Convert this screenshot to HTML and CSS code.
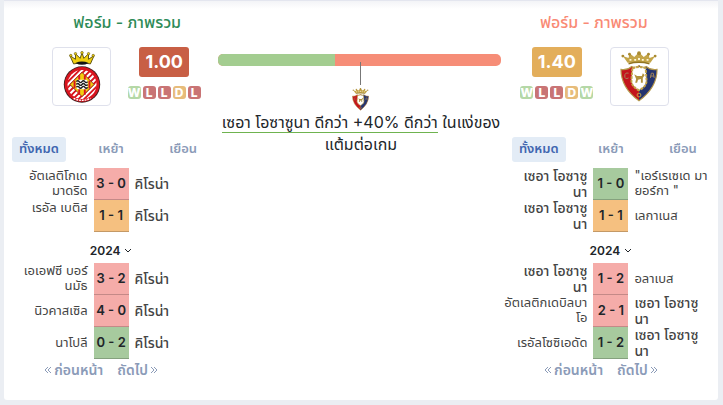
FILE: index.html
```html
<!DOCTYPE html>
<html lang="th">
<head>
    <meta charset="UTF-8">
    <meta name="viewport" content="width=device-width, initial-scale=1.0">
    <title>ฟอร์ม - ภาพรวม</title>
    <link rel="stylesheet" href="styles.css">
</head>
<body>
    <!-- Shared crests -->
    <svg class="defs" width="0" height="0" aria-hidden="true">
        <defs>
            <clipPath id="ring"><circle cx="30" cy="38" r="16"/></clipPath>
            <symbol id="girona" viewBox="0 0 60 60">
                <path d="M21 16 L17 7 L23 11 L23 5 L28 10 L30 4 L32 10 L37 5 L37 11 L43 7 L39 16 Q30 13 21 16z" fill="#f0cf10" stroke="#54490c" stroke-width="1"/>
                <g fill="#f0cf10" stroke="#54490c" stroke-width=".6"><circle cx="18" cy="7" r="1.3"/><circle cx="23" cy="5" r="1.3"/><circle cx="30" cy="4" r="1.4"/><circle cx="37" cy="5" r="1.3"/><circle cx="42" cy="7" r="1.3"/></g>
                <path d="M23 15 Q30 12 37 15 Q30 19 23 15z" fill="#151515"/>
                <circle cx="30" cy="38" r="19.5" fill="#3b2020"/>
                <circle cx="30" cy="38" r="18.6" fill="#d9141e"/>
                <circle cx="30" cy="38" r="15.5" fill="#fff"/>
                <g clip-path="url(#ring)" stroke="#d9141e" stroke-width="2">
                    <path d="M10 34L28 16M10 40L34 16M10 46L40 16M10 52L46 16M10 58L52 16M16 58L54 20M22 58L54 26M28 58L54 32M34 58L54 38"/>
                </g>
                <path d="M30 25L43 38L30 51L17 38z" fill="#f0cf10" stroke="#8a1a15" stroke-width="1"/>
                <path d="M27 28V49M33 28V49M22 34V42M38 34V42" stroke="#d9141e" stroke-width="2"/>
                <rect x="24" y="33" width="12" height="10" rx="2" fill="#fff"/>
                <path d="M24 35q1.500-2 3 0t3 0t3 0t3 0M24 38q1.500-2 3 0t3 0t3 0t3 0M24 41q1.500-2 3 0t3 0t3 0t3 0" fill="none" stroke="#222" stroke-width="1.500"/>
                <path d="M21 53q9 4 18 0" fill="none" stroke="#fff" stroke-width="1.500" stroke-dasharray="2 1"/>
            </symbol>
            <symbol id="osasuna" viewBox="0 0 40 54">
                <path d="M8 12L3 5L9 7L10 2L15 6L20 1L25 6L30 2L31 7L37 5L32 12z" fill="#c4a548"/>
                <g fill="#a98a31"><circle cx="3" cy="5" r="1.500"/><circle cx="10" cy="3" r="1.500"/><circle cx="20" cy="2" r="2"/><circle cx="30" cy="3" r="1.500"/><circle cx="37" cy="5" r="1.500"/></g>
                <path d="M10 9h2m3 0h2m2-1h2m2 1h2m3 0h2" stroke="#fff6d5" stroke-width="2"/>
                <path d="M9 13Q20 10 31 13" fill="none" stroke="#917522" stroke-width="1.500"/>
                <path d="M1 19Q8 20 12 16Q16 18 20 15Q24 18 28 16Q32 20 39 19Q39 38 20 52Q1 38 1 19z" fill="#c3151c"/>
                <path d="M20 15Q24 18 28 16Q32 20 39 19Q39 38 20 52z" fill="#24346f"/>
                <path d="M1 19Q8 20 12 16Q16 18 20 15Q24 18 28 16Q32 20 39 19Q39 38 20 52Q1 38 1 19z" fill="none" stroke="#b59a4d" stroke-width="1.200"/>
                <path d="M13 18Q20 15 27 18L28 31Q28 37 20 41Q12 37 12 31z" fill="#fff" stroke="#c4a548" stroke-width="2" stroke-dasharray="3 1"/>
                <path d="M15 24l3 2h5l1-3 2 2-2 3v5h-2v-4l-3 1-1 3h-2l1-4z" fill="#b1923c"/>
                <path d="M9 23q-4-1-4 3t4 2M32 28l1-5h2l1 5M32 26h4" fill="none" stroke="#a5875b" stroke-width="1"/>
                <circle cx="20" cy="46" r="2" fill="none" stroke="#c4a548"/>
            </symbol>
        </defs>
    </svg>

    <main class="card">
        <section class="team">
            <div class="team-head team-head-home">
                <div class="team-box">
                    <h2 class="title home">ฟอร์ม - ภาพรวม</h2>
                    <div class="summary">
                        <div class="crest"><svg class="crest-girona" role="img" aria-label="คิโรน่า"><use href="#girona"/></svg></div>
                        <div class="rating">
                            <div class="points low">1.00</div>
                            <div class="form"><span class="w">W</span><span class="l">L</span><span class="l">L</span><span class="d">D</span><span class="l">L</span></div>
                        </div>
                    </div>
                </div>
            </div>
            <div class="tabs">
                <button class="tab active">ทั้งหมด</button>
                <button class="tab">เหย้า</button>
                <button class="tab">เยือน</button>
            </div>
            <table class="results">
                <tr><td class="left">อัตเลติโกเด<br>มาดริด</td><td class="score loss">3 - 0</td><td class="own">คิโรน่า</td></tr>
                <tr><td class="left top">เรอัล เบติส</td><td class="score draw">1 - 1</td><td class="own">คิโรน่า</td></tr>
            </table>
            <button class="year">2024 <svg class="chevron" viewBox="0 0 8 8"><path d="M1 2l3 3 3-3"/></svg></button>
            <table class="results">
                <tr><td class="left">เอเอฟซี บอร์<br>นมัธ</td><td class="score loss">3 - 2</td><td class="own">คิโรน่า</td></tr>
                <tr><td class="left">นิวคาสเซิล</td><td class="score loss">4 - 0</td><td class="own">คิโรน่า</td></tr>
                <tr><td class="left">นาโปลี</td><td class="score win">0 - 2</td><td class="own">คิโรน่า</td></tr>
            </table>
            <nav class="pager">
                <a href="#"><svg class="arrows" viewBox="0 0 8 8"><path d="M4 1L1 4l3 3M7 1L4 4l3 3"/></svg>ก่อนหน้า</a>
                <a href="#">ถัดไป<svg class="arrows" viewBox="0 0 8 8"><path d="M1 1l3 3-3 3M4 1l3 3-3 3"/></svg></a>
            </nav>
        </section>

        <section class="compare">
            <div class="bar"><div class="bar-home" style="width: 41.5%"></div></div>
            <div class="pointer"></div>
            <svg class="mini-crest" role="img" aria-label="เซอา โอซาซูนา"><use href="#osasuna"/></svg>
            <p class="verdict"><span class="better">เซอา โอซาซูนา ดีกว่า +40% ดีกว่า</span> ในแง่ของ<br>แต้มต่อเกม</p>
        </section>

        <section class="team">
            <div class="team-head">
                <div class="team-box">
                    <h2 class="title away">ฟอร์ม - ภาพรวม</h2>
                    <div class="summary">
                        <div class="rating">
                            <div class="points mid">1.40</div>
                            <div class="form"><span class="w">W</span><span class="l">L</span><span class="l">L</span><span class="d">D</span><span class="w">W</span></div>
                        </div>
                        <div class="crest"><svg class="crest-osasuna" role="img" aria-label="เซอา โอซาซูนา"><use href="#osasuna"/></svg></div>
                    </div>
                </div>
            </div>
            <div class="tabs">
                <button class="tab active">ทั้งหมด</button>
                <button class="tab">เหย้า</button>
                <button class="tab">เยือน</button>
            </div>
            <table class="results">
                <tr><td class="left own">เซอา โอซาซู<br>นา</td><td class="score win">1 - 0</td><td>"เอร์เรเซเด มา<br>ยอร์กา "</td></tr>
                <tr><td class="left own">เซอา โอซาซู<br>นา</td><td class="score draw">1 - 1</td><td>เลกาเนส</td></tr>
            </table>
            <button class="year">2024 <svg class="chevron" viewBox="0 0 8 8"><path d="M1 2l3 3 3-3"/></svg></button>
            <table class="results">
                <tr><td class="left own">เซอา โอซาซู<br>นา</td><td class="score loss">1 - 2</td><td>อลาเบส</td></tr>
                <tr><td class="left">อัตเลติกเดบิลบา<br>โอ</td><td class="score loss">2 - 1</td><td class="own">เซอา โอซาซู<br>นา</td></tr>
                <tr><td class="left">เรอัลโซซิเอดัด</td><td class="score win">1 - 2</td><td class="own">เซอา โอซาซู<br>นา</td></tr>
            </table>
            <nav class="pager">
                <a href="#"><svg class="arrows" viewBox="0 0 8 8"><path d="M4 1L1 4l3 3M7 1L4 4l3 3"/></svg>ก่อนหน้า</a>
                <a href="#">ถัดไป<svg class="arrows" viewBox="0 0 8 8"><path d="M1 1l3 3-3 3M4 1l3 3-3 3"/></svg></a>
            </nav>
        </section>
    </main>
</body>
</html>
```
FILE: styles.css
```css
* {
    box-sizing: border-box;
}

body {
    margin: 0;
    background: #ebeef3;
    color: #212529;
    font-family: Inter, "Noto Sans Thai", "Noto Sans", sans-serif;
    font-size: 13px;
}

button {
    border: 0;
    padding: 0;
    background: none;
    font-family: inherit;
    cursor: pointer;
}

.defs {
    position: absolute;
}

.card {
    display: grid;
    grid-template-columns: 3fr 4fr 3fr;
    margin: 0 5px 5px 4px;
    padding-bottom: 20px;
    border-top: 1px solid #e4e6ef;
    border-radius: 0 0 3px 3px;
    background: linear-gradient(#f3f4f7, #fff 8px);
}

.team {
    min-width: 0;
}

.team-head {
    display: flex;
    padding: 10px 15px 0;
}

.team-head-home {
    justify-content: flex-end;
    padding-right: 16px;
}

.title {
    margin: 0 0 14px;
    font-size: 16px;
    line-height: 22px;
    font-weight: 500;
    text-align: center;
}

.title.home {
    color: #2e8b57;
}

.title.away {
    color: #f98a75;
}

.summary {
    display: flex;
    gap: 15px;
}

.crest {
    display: flex;
    justify-content: center;
    align-items: center;
    width: 59px;
    height: 59px;
    border: 1px solid #dfe1ec;
    border-radius: 4px;
}

.crest-girona {
    width: 56px;
    height: 56px;
}

.crest-osasuna {
    width: 38px;
    height: 52px;
}

.rating {
    display: flex;
    flex-direction: column;
    align-items: center;
    gap: 9px;
    width: 76px;
}

.points {
    width: 50px;
    border-radius: 3px;
    color: #fff;
    font-size: 18px;
    line-height: 30px;
    font-weight: 700;
    text-align: center;
}

.points.low {
    background: #c85f45;
}

.points.mid {
    background: #e3ae5b;
}

.form {
    display: flex;
    gap: 2px;
}

.form span {
    width: 13px;
    border-radius: 3px;
    color: #fff;
    font-size: 12px;
    line-height: 13px;
    font-weight: 800;
    text-align: center;
}

.form .w {
    background: #b5d8a6;
}

.form .l {
    background: #c97475;
}

.form .d {
    background: #e7bc7b;
}

.tabs {
    display: flex;
    justify-content: space-between;
    margin: 31px 8px 6px;
}

.tab {
    width: 54px;
    height: 25px;
    padding-bottom: 2px;
    border-radius: 3px;
    color: #8b9bb8;
    font-size: 13px;
    font-weight: 600;
}

.tab.active {
    background: #e3ecf6;
    color: #3f66b0;
}

.results {
    width: 100%;
    table-layout: fixed;
    border-collapse: separate;
    border-spacing: 0;
}

.results td {
    height: 32px;
    padding: 0 0 2px 6px;
    color: #444;
    line-height: 15px;
    white-space: nowrap;
}

.results .left {
    padding: 0 6px 2px 0;
    text-align: right;
}

.results .top {
    vertical-align: top;
}

.results .own {
    padding-bottom: 0;
    font-size: 14px;
    line-height: 16px;
    font-weight: 500;
}

.results .score {
    width: 35px;
    padding: 0;
    border-bottom: 1px solid rgba(0, 0, 0, 0.2);
    color: #212529;
    font-size: 13px;
    font-weight: 600;
    text-align: center;
}

.results .loss {
    background-color: #f5aca9;
}

.results .draw {
    background-color: #f5c080;
}

.results .win {
    background-color: #a7ca9e;
}

.year {
    display: flex;
    justify-content: center;
    align-items: center;
    gap: 4px;
    width: 100%;
    height: 31px;
    padding-top: 6px;
    color: #212529;
    font-size: 12px;
    font-weight: 600;
}

.chevron,
.arrows {
    width: 8px;
    height: 8px;
    fill: none;
    stroke: currentColor;
    stroke-width: 1;
}

.pager {
    display: flex;
    justify-content: center;
    gap: 14px;
    padding-right: 20px;
}

.pager a {
    display: flex;
    align-items: center;
    gap: 2px;
    color: #8b9bb8;
    font-size: 14px;
    line-height: 21px;
    font-weight: 600;
    text-decoration: none;
}

.compare {
    display: flex;
    flex-direction: column;
    align-items: center;
    padding-top: 53px;
}

.bar {
    align-self: stretch;
    height: 12px;
    margin-right: 3px;
    border-radius: 5px;
    background: #f68d77;
    overflow: hidden;
}

.bar-home {
    height: 100%;
    background: #a3cd90;
}

.pointer {
    width: 1px;
    height: 23px;
    margin-top: -4px;
    background: #777;
}

.mini-crest {
    width: 17px;
    height: 23px;
    margin-top: 3px;
}

.verdict {
    margin: 0;
    font-size: 16px;
    line-height: 22px;
    text-align: center;
    white-space: nowrap;
}

.better {
    border-bottom: 1px solid #6fb34f;
}
```
